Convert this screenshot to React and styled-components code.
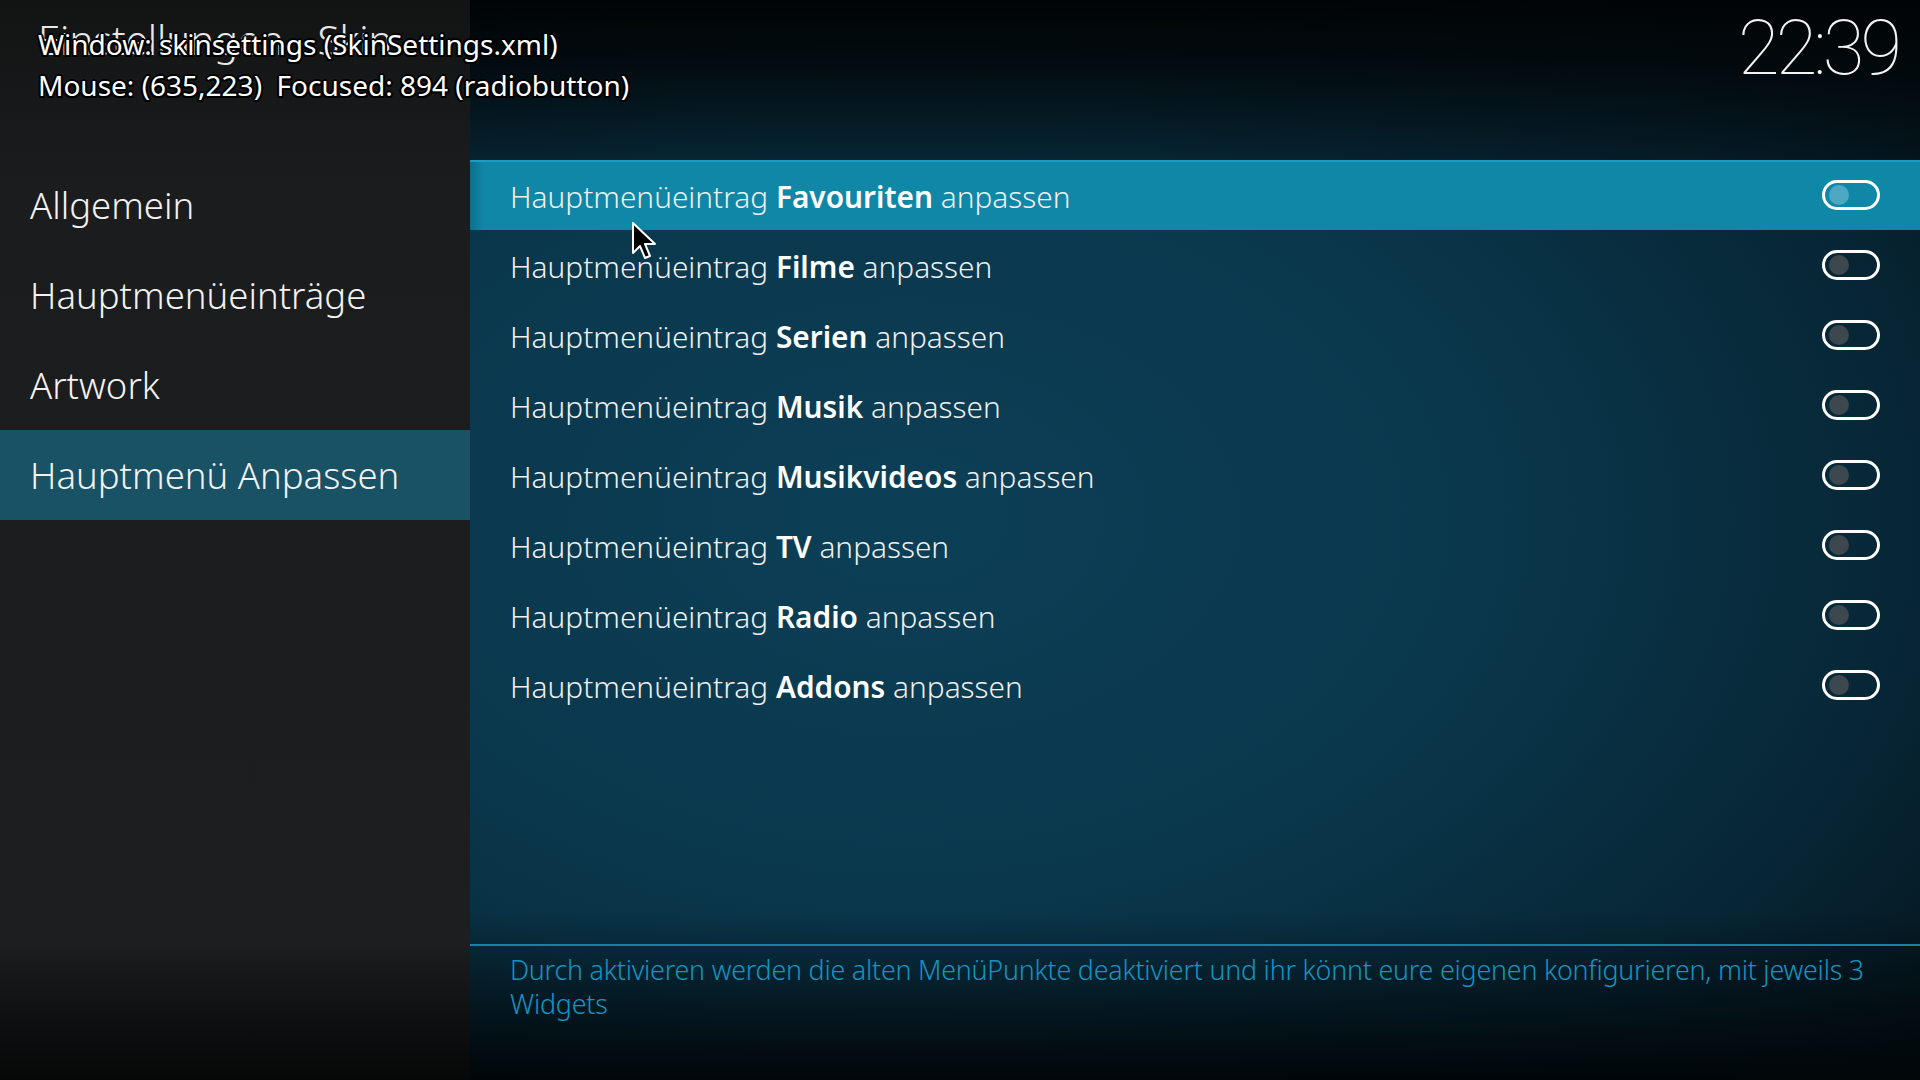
import React from 'react';
import styled, { createGlobalStyle } from 'styled-components';

const GlobalStyle = createGlobalStyle`
  html, body {
    margin: 0;
    padding: 0;
    background: #000;
  }
  body {
    font-family: "Noto Sans", "Open Sans", sans-serif;
    color: #fff;
  }
`;

const Screen = styled.div`
  position: relative;
  width: 1920px;
  height: 1080px;
  overflow: hidden;
  display: flex;
`;

const Sidebar = styled.aside`
  width: 470px;
  flex: 0 0 470px;
  display: flex;
  flex-direction: column;
  background: linear-gradient(to bottom, #121313 0px, #1b1c1d 180px, #1c1e20 940px, #101112 1010px, #060707 1080px);
`;

const TitleArea = styled.div`
  height: 160px;
  padding: 14px 0 0 38px;
  box-sizing: border-box;
  overflow: hidden;
`;

const Title = styled.h1`
  margin: 0;
  font-size: 40px;
  font-weight: 300;
  line-height: 52px;
  color: #e8e8e8;
  white-space: nowrap;
`;

const NavItem = styled.div`
  height: 90px;
  display: flex;
  align-items: center;
  padding-left: 30px;
  font-size: 36.5px;
  font-weight: 300;
  color: #f2f2f2;
  background: ${(p) => (p.$active ? '#195264' : 'transparent')};
`;

const Main = styled.main`
  flex: 1;
  display: flex;
  flex-direction: column;
  background:
    linear-gradient(to bottom, #010406 0px, rgba(1, 4, 6, 0.85) 60px, rgba(1, 4, 6, 0) 230px),
    linear-gradient(to top, #010609 0px, rgba(1, 6, 9, 0) 170px),
    radial-gradient(ellipse 1300px 850px at 30% 48%, #0c3f56 0%, #0a374c 45%, #072635 78%, #04151d 100%);
`;

const TopBar = styled.div`
  height: 160px;
  display: flex;
  justify-content: flex-end;
  align-items: flex-start;
  padding-right: 22px;
  box-sizing: border-box;
`;

const Clock = styled.div`
  font-family: Roboto, "Noto Sans", sans-serif;
  font-weight: 100;
  font-size: 76px;
  line-height: 96px;
  letter-spacing: -4px;
  color: #f4f4f4;
`;

const List = styled.div`
  display: flex;
  flex-direction: column;
`;

const Row = styled.div`
  height: 70px;
  box-sizing: border-box;
  display: flex;
  align-items: center;
  justify-content: space-between;
  padding: 0 40px 0 40px;
  background: ${(p) =>
    p.$focused
      ? 'linear-gradient(to right, #0c6f8c 0px, #1187a8 14px, #1187a8 100%)'
      : 'transparent'};
  border-top: 2px solid ${(p) => (p.$focused ? '#1d9cc0' : 'transparent')};
`;

const Label = styled.span`
  font-size: 29.8px;
  font-weight: 300;
  color: #f0f0f0;
  white-space: nowrap;

  b {
    font-weight: 600;
    color: #fff;
  }
`;

const Toggle = styled.span`
  width: 58px;
  height: 30px;
  box-sizing: border-box;
  border: 3px solid #fff;
  border-radius: 15px;
  display: flex;
  align-items: center;
  padding-left: 4px;
  margin-top: -2px;
`;

const Knob = styled.span`
  width: 20px;
  height: 20px;
  border-radius: 50%;
  background: ${(p) => (p.$focused ? '#4ea8c3' : '#3d474e')};
`;

const Spacer = styled.div`
  flex: 1;
`;

const Footer = styled.footer`
  height: 136px;
  box-sizing: border-box;
  border-top: 2px solid #1283a8;
  padding: 7px 40px 0 40px;
`;

const Description = styled.p`
  margin: 0;
  font-size: 26.8px;
  font-weight: 300;
  line-height: 34px;
  letter-spacing: -0.2px;
  color: #1395c2;
`;

const DebugOverlay = styled.div`
  position: absolute;
  top: 24px;
  left: 38px;
  font-size: 28px;
  line-height: 41px;
  color: #fff;
  white-space: pre;
  text-shadow:
    -1.5px -1.5px 0 #000, 1.5px -1.5px 0 #000, -1.5px 1.5px 0 #000, 1.5px 1.5px 0 #000,
    0 2px 0 #000, 0 -2px 0 #000, 2px 0 0 #000, -2px 0 0 #000;
`;

const Cursor = styled.svg`
  position: absolute;
  left: 631px;
  top: 221px;
`;

const entries = [
  'Favouriten',
  'Filme',
  'Serien',
  'Musik',
  'Musikvideos',
  'TV',
  'Radio',
  'Addons',
];

const navItems = ['Allgemein', 'Hauptmenüeinträge', 'Artwork', 'Hauptmenü Anpassen'];

export default function App() {
  return (
    <>
      <GlobalStyle />
      <Screen>
        <Sidebar>
          <TitleArea>
            <Title>Einstellungen - Skin</Title>
          </TitleArea>
          {navItems.map((item, i) => (
            <NavItem key={item} $active={i === 3}>
              {item}
            </NavItem>
          ))}
        </Sidebar>
        <Main>
          <TopBar>
            <Clock>22:39</Clock>
          </TopBar>
          <List>
            {entries.map((name, i) => (
              <Row key={name} $focused={i === 0}>
                <Label>
                  Hauptmenüeintrag <b>{name}</b> anpassen
                </Label>
                <Toggle>
                  <Knob $focused={i === 0} />
                </Toggle>
              </Row>
            ))}
          </List>
          <Spacer />
          <Footer>
            <Description>
              Durch aktivieren werden die alten MenüPunkte deaktiviert und ihr könnt eure eigenen
              konfigurieren, mit jeweils 3 Widgets
            </Description>
          </Footer>
        </Main>
        <DebugOverlay>
          {'Window: skinsettings (SkinSettings.xml)\nMouse: (635,223)  Focused: 894 (radiobutton)'}
        </DebugOverlay>
        <Cursor width="26" height="40" viewBox="0 0 26 40">
          <path
            d="M2 2 L2 32 L9 25 L14 37 L19 35 L14 23 L24 23 Z"
            fill="#000"
            stroke="#fff"
            strokeWidth="2"
            strokeLinejoin="round"
          />
        </Cursor>
      </Screen>
    </>
  );
}
